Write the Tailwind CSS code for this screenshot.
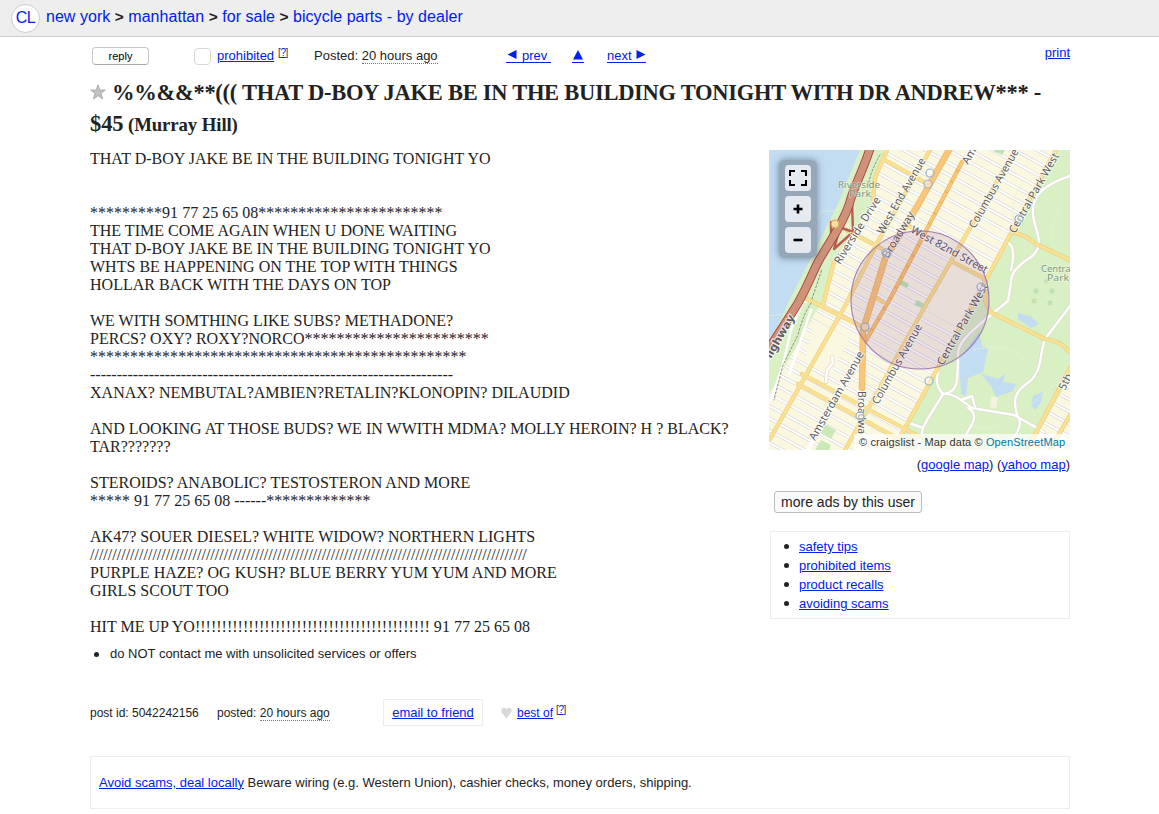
<!DOCTYPE html>
<html lang="en">
<head>
<meta charset="utf-8">
<title>craigslist</title>
<script src="https://cdn.jsdelivr.net/npm/@tailwindcss/browser@4"></script>
</head>
<body class="w-[1159px] h-[814px] overflow-hidden bg-white text-[#222] font-['Liberation_Sans',Arial,sans-serif] text-[13px] whitespace-nowrap">
<header class="h-[37px] bg-[#eee] border-b border-[#ccc] flex items-center pl-[11px] text-[16px] leading-[20px] text-[#0020ee]">
  <a class="size-[29px] rounded-full border border-[#ccc] bg-white flex items-center justify-center text-[16px] tracking-[-0.6px]">CL</a>
  <nav class="ml-1.5 -mt-[3px] tracking-[0.03px]"><a>new york</a> <b class="text-[#222] text-[15.5px]">&gt;</b> <a>manhattan</a> <b class="text-[#222] text-[15.5px]">&gt;</b> <a>for sale</a> <b class="text-[#222] text-[15.5px]">&gt;</b> <a>bicycle parts - by dealer</a></nav>
</header>
<main class="ml-[90px] w-[980px]">
  <div class="flex h-[38px] pt-[9px] leading-[19px]">
    <button class="ml-[2px] mt-[1px] w-[57px] h-[18px] rounded-[4px] border border-[#c8c8c8] border-b-[#aaa] text-[11px] leading-[16px] text-black">reply</button>
    <span class="ml-[45px] mt-[2px] w-[17px] h-[17px] rounded-[4px] border border-[#d8d8d8]"></span>
    <a class="ml-[6px] underline text-[#0020ee] w-[57px]">prohibited</a>
    <span class="ml-[4px] -mt-[3px] text-[10px] tracking-[-0.4px] text-[#333] w-[12px]">[<a class="underline text-[#0020ee]">?</a>]</span>
    <span class="ml-[24px] w-[123px]">Posted: <span class="border-b border-dotted border-[#777]">20 hours ago</span></span>
    <a class="ml-[69px] w-[45px] h-[17px] pt-[2px] border-b border-[#0020ee] text-[#0020ee] flex items-center"><svg class="w-[10px] h-[9px] ml-px mr-[5px] -mt-[2px]" viewBox="0 0 10 10"><path d="M0 5 10 0V10Z" fill="currentColor"/></svg>prev</a>
    <a class="ml-[21px] w-[12px] h-[17px] pt-[2px] border-b border-[#0020ee] text-[#0020ee] flex items-center justify-center"><svg class="w-[10px] h-[10px]" viewBox="0 0 10 10"><path d="M5 0 10 9.5H0Z" fill="currentColor"/></svg></a>
    <a class="ml-[23px] w-[39px] h-[17px] pt-[2px] border-b border-[#0020ee] text-[#0020ee] flex items-center">next<svg class="w-[10px] h-[9px] ml-[4px] -mt-[2px]" viewBox="0 0 10 10"><path d="M10 5 0 0V10Z" fill="currentColor"/></svg></a>
    <a class="ml-auto -mt-[3px] underline text-[#0020ee]">print</a>
  </div>
  <h2 class="h-[75px] pt-[2px] font-bold font-['Liberation_Serif',serif] text-[22.5px] leading-[32px]">
    <div class="flex"><svg class="w-[16px] h-[16px] mt-[7px] mr-[6px]" viewBox="0 0 16 16"><path d="M8 .8 9.9 6H15.3L11 9.4 12.7 15 8 11.7 3.3 15 5 9.4 .7 6H6.1Z" fill="#c4c2c2" stroke="#a5a3a3" stroke-width=".8"/></svg><span class="tracking-[-0.27px]">%%&amp;&amp;**((( THAT D-BOY JAKE BE IN THE BUILDING TONIGHT WITH DR ANDREW*** -</span></div>
    <div class="-mt-px tracking-[-0.1px]">$45 <span class="text-[18.8px] -ml-px">(Murray Hill)</span></div>
  </h2>
  <div class="flex h-[549px]">
    <div class="w-[679px]">
      <section class="font-['Liberation_Serif',serif] text-[16px] leading-[18px] h-[495px] whitespace-pre tracking-[0.012px]">THAT D-BOY JAKE BE IN THE BUILDING TONIGHT YO


*********91 77 25 65 08***********************
THE TIME COME AGAIN WHEN U DONE WAITING
THAT D-BOY JAKE BE IN THE BUILDING TONIGHT YO
WHTS BE HAPPENING ON THE TOP WITH THINGS
HOLLAR BACK WITH THE DAYS ON TOP

WE WITH SOMTHING LIKE SUBS? METHADONE?
PERCS? OXY? ROXY?NORCO***********************
***********************************************
--------------------------------------------------------------------
XANAX? NEMBUTAL?AMBIEN?RETALIN?KLONOPIN? DILAUDID

AND LOOKING AT THOSE BUDS? WE IN WWITH MDMA? MOLLY HEROIN? H ? BLACK?
TAR???????

STEROIDS? ANABOLIC? TESTOSTERON AND MORE
***** 91 77 25 65 08 ------*************

AK47? SOUER DIESEL? WHITE WIDOW? NORTHERN LIGHTS
//////////////////////////////////////////////////////////////////////////////////////////////////
PURPLE HAZE? OG KUSH? BLUE BERRY YUM YUM AND MORE
GIRLS SCOUT TOO

HIT ME UP YO!!!!!!!!!!!!!!!!!!!!!!!!!!!!!!!!!!!!!!!!!!!! 91 77 25 65 08</section>
      <div class="flex items-center h-[18px]"><span class="ml-[4px] mr-[11px] size-[5px] rounded-full bg-[#222]"></span>do NOT contact me with unsolicited services or offers</div>
      <div class="flex items-center mt-[36px] h-[27px]">
        <span class="w-[127px] text-[12px]">post id: 5042242156</span>
        <span class="w-[166px] text-[12px]">posted: <span class="border-b border-dotted border-[#777]">20 hours ago</span></span>
        <span class="w-[100px] h-[27px] border border-[#eee] flex items-center justify-center text-[#0020ee] underline">email to friend</span>
        <svg class="ml-[18px] w-[11px] h-[12px] mt-[1px]" viewBox="0 0 11 12"><path d="M5.5 12C4.7 9.3 .3 6.5 .3 3.2 .3 .2 4.4-.3 5.5 2.5 6.6-.3 10.7 .2 10.7 3.2 10.7 6.5 6.3 9.3 5.5 12Z" fill="#d8d8d8"/></svg>
        <a class="ml-[5px] w-[37px] text-[12px] underline text-[#0020ee]">best of</a>
        <span class="ml-[2px] -mt-[7px] text-[10px] tracking-[-0.4px] text-[#333]">[<a class="underline text-[#0020ee]">?</a>]</span>
      </div>
    </div>
    <aside class="w-[301px]">
      <div class="relative w-[301px] h-[300px] overflow-hidden">
        <svg class="block" width="301" height="300" viewBox="0 0 301 300" fill="none" stroke-linecap="round" stroke-linejoin="round">
          <rect width="301" height="300" fill="#fbf8e2"/>
          <g transform="rotate(28.7)">
            <path class="grid-lines" stroke="#d9d3d3" stroke-width="3.2"/><path class="grid-lines" stroke="#fff" stroke-width="2"/>
          </g>
          <path d="M183 114 215 132 190 178 158 161Z" fill="#fbf8e2"/>
          <path d="M45 170 80 188 62 225 36 212Z" fill="#fbf8e2"/>
          <path d="M0 0H118L106 28 104 52 64 112 54 149 0 245Z" fill="#d9efc4"/>
          <path d="M0 0H91L68 56 43 106 20 151 0 195Z" fill="#c2dcf2"/>
          <path d="M45 76 52 61H67M0 166 20 163" stroke="#dbe8df" stroke-width="1"/>
          <path d="M42 150 34 152 22 180 14 215 2 250M42 160 20 225" stroke="#fff" stroke-width="2.5"/>
          <path d="M63 207 64 213 58 220 57 232" stroke="#e2dcd2" stroke-width="4"/><path d="M63 207 64 213 58 220 57 232" stroke="#fff" stroke-width="2.5"/>
          <path d="M287 0 219 126 124 300H260L301 226V0Z" fill="#d9efc4"/>
          <path d="M139 300 151 262 160 245V300Z" fill="#d9efc4"/>
          <path d="M56 274 67 280 62 289 52 283ZM52 290 62 295 60 300H46Z" fill="#cbe8b8"/>
          <path d="M225 0H236L233 5 224 1ZM131 129 140 134 138 138 129 134ZM148 150 156 154 154 158 145 155Z" fill="#bfe3b5"/>
          <g fill="#c2dcf2">
            <path d="M210 182 213 196 219 199 214 222 199 228 197 246 192 244 190 209Z"/>
            <path d="M212 224 229 229 236 224 234 232 247 234 244 241 227 247 222 236Z"/>
            <path d="M264 246 274 242 272 252 266 260 262 255ZM249 163 261 166 270 174 262 178 249 169Z"/>
          </g>
          <g fill="#bfe1b6"><circle cx="267" cy="141" r="2.5"/><circle cx="283" cy="141" r="2.5"/><circle cx="277" cy="131" r="2"/><circle cx="265" cy="151" r="2.5"/><circle cx="281" cy="153" r="2.5"/></g>
          <path d="M255 30Q235 60 250 80T245 130M290 60Q275 90 290 105M180 260Q210 290 240 270T290 230M205 200Q240 190 260 215" stroke="#e6f4d9" stroke-width="1" stroke-dasharray="2 2"/>
          <g stroke="#ddd6d0" stroke-width="3.4">
            <path class="park-road"/>
          </g>
          <path class="park-road" stroke="#fff" stroke-width="2.4"/>
          <path d="M222 247H229L227 259 221 257Z" fill="#f6f1dc"/>
          <path class="avenue" stroke="#e8cb74" stroke-width="4.2"/>
          <path class="avenue" stroke="#f9e092" stroke-width="3.2"/>
          <path d="M94 196 39 300M92 242V300" stroke="#fff" stroke-width="4"/>
          <path d="M193 12 149 96 121 149 96 192" stroke="#eeb45c" stroke-width="4.2"/>
          <path d="M193 12 149 96 121 149 96 192" stroke="#f9c77a" stroke-width="2.8" stroke-dasharray="8 4"/>
          <path d="M180 0 149 55 116 109 103 151 94 180 93 238" stroke="#efb968" stroke-width="6.5"/>
          <path d="M180 0 149 55 116 109 103 151 94 180 93 238" stroke="#f9c67c" stroke-width="5" stroke-dasharray="12 4"/>
          <path d="M83 52 84 82 65 99 73 70ZM84 82 67 76 62 84 62 72" stroke="#bd5b50" stroke-width="2.4"/>
          <path d="M103-8C95 20 85 35 80 55 72 78 60 92 49 112 38 135 34 146 26 158L-4 205" stroke="#a5443c" stroke-width="9" stroke-linecap="butt"/>
          <path d="M103-8C95 20 85 35 80 55 72 78 60 92 49 112 38 135 34 146 26 158L-4 205" stroke="#cf9279" stroke-width="7.2" stroke-linecap="butt"/>
          <circle cx="66" cy="74" r="4" fill="#f8dfa0" stroke="#d9a54c"/><circle cx="79" cy="75" r="2" fill="#f6efc8"/><circle cx="75" cy="84" r="2" fill="#f6efc8"/>
          <path d="M111 5Q102 20 99 36M43 149 53 119M42 153Q34 165 29 185L14 215 5 250" stroke="#8b9080" stroke-width="1" stroke-dasharray="2 2"/>
          <g font-family="'Noto Sans','DejaVu Sans',sans-serif" font-size="11" fill="#5c5c5c" stroke="#fff" stroke-opacity=".75" stroke-width="2" paint-order="stroke">
            <text transform="translate(71 115) rotate(-57.8)" textLength="77" lengthAdjust="spacingAndGlyphs">Riverside Drive</text>
            <text transform="translate(114 85) rotate(-60)" textLength="86" lengthAdjust="spacingAndGlyphs">West End Avenue</text>
            <text transform="translate(119 109) rotate(-59)" textLength="52" lengthAdjust="spacingAndGlyphs">Broadway</text>
            <text transform="translate(199 15) rotate(-60)">Am</text>
            <text transform="translate(206 79) rotate(-60.5)" textLength="89" lengthAdjust="spacingAndGlyphs">Columbus Avenue</text>
            <text transform="translate(246 84) rotate(-60.5)" textLength="90" lengthAdjust="spacingAndGlyphs">Central Park West</text>
            <text transform="translate(141 82) rotate(29)" textLength="86" lengthAdjust="spacingAndGlyphs">West 82nd Street</text>
            <text transform="translate(2 209) rotate(-60)" textLength="48" lengthAdjust="spacingAndGlyphs" font-weight="bold">lighway</text>
            <text transform="translate(46 291) rotate(-60.5)" textLength="100" lengthAdjust="spacingAndGlyphs">Amsterdam Avenue</text>
            <text transform="translate(109 255) rotate(-60.5)" textLength="90" lengthAdjust="spacingAndGlyphs">Columbus Avenue</text>
            <text transform="translate(174 216) rotate(-60.5)" textLength="92" lengthAdjust="spacingAndGlyphs">Central Park West</text>
            <text transform="translate(89 241) rotate(90)" textLength="43" lengthAdjust="spacingAndGlyphs">Broadwa</text>
            <text transform="translate(296 241) rotate(-64)">5th</text>
          </g>
          <g fill="#fff" fill-opacity=".4" stroke="#94b3cf" stroke-width="1.2"><circle cx="161" cy="23" r="4"/><circle cx="159" cy="34" r="4"/><circle cx="250" cy="69" r="4"/><circle cx="117" cy="103" r="4"/><circle cx="96" cy="177" r="4"/><circle cx="212" cy="137" r="4"/><circle cx="160" cy="231" r="4"/><circle cx="91" cy="266" r="4"/></g>
          <g font-family="'Noto Sans','DejaVu Sans',sans-serif" font-size="9.5" fill="#7e987c" text-anchor="middle" stroke="#fff" stroke-opacity=".4" stroke-width="1.5" paint-order="stroke">
            <text x="90" y="38" textLength="42" lengthAdjust="spacingAndGlyphs">Riverside</text><text x="91" y="47" textLength="22" lengthAdjust="spacingAndGlyphs">Park</text><text x="288" y="122" textLength="32" lengthAdjust="spacingAndGlyphs">Central</text><text x="289" y="131" textLength="22" lengthAdjust="spacingAndGlyphs">Park</text>
          </g>
          <circle cx="151" cy="150" r="69" fill="#5c1080" fill-opacity=".11" stroke="#9060a8" stroke-opacity=".8" stroke-width="1.1"/>
        </svg>
        <div class="absolute left-[10px] top-[10px] w-[38px] h-[98px] rounded-[6px] bg-[#96a8b8] shadow-[0_0_6px_1px_rgba(70,90,110,.5)] flex flex-col gap-[5px] items-center pt-[5px]">
          <span class="size-[26px] rounded-[4px] bg-[#e4eaef] flex items-center justify-center"><svg width="18" height="16" viewBox="0 0 18 16" fill="none" stroke="#000" stroke-width="2"><path d="M1 6V1H6M12 1H17V6M17 10V15H12M6 15H1V10"/></svg></span>
          <span class="size-[26px] rounded-[4px] bg-[#e4eaef] flex items-center justify-center"><svg width="10" height="10" viewBox="0 0 10 10" stroke="#000" stroke-width="2.6"><path d="M.5 5H9.5M5 .5V9.5"/></svg></span>
          <span class="size-[26px] rounded-[4px] bg-[#e4eaef] flex items-center justify-center"><svg width="10" height="10" viewBox="0 0 10 10" stroke="#000" stroke-width="2.6"><path d="M.5 5H9.5"/></svg></span>
        </div>
        <div class="absolute right-0 bottom-0 h-[16px] w-[216px] pl-[5px] bg-white/70 text-[11px] tracking-[0.12px] leading-[16px] text-[#333]">© craigslist - Map data © <a class="text-[#0078a8]">OpenStreetMap</a></div>
      </div>
      <div class="text-right h-[41px] pt-[6px] leading-[18px]">(<a class="underline text-[#0020ee]">google map</a>) (<a class="underline text-[#0020ee]">yahoo map</a>)</div>
      <button class="block ml-[5px] w-[148px] h-[22px] rounded-[3px] border border-[#bbb] bg-[#fafafa] text-[14px] leading-[20px]">more ads by this user</button>
      <ul class="mt-[18px] ml-px w-[300px] h-[88px] border border-[#eee] pt-[5px] leading-[19px] text-[#0020ee] underline">
        <li class="flex items-center"><i class="ml-[13px] mr-[10px] size-[5px] rounded-full bg-[#222]"></i>safety tips</li>
        <li class="flex items-center"><i class="ml-[13px] mr-[10px] size-[5px] rounded-full bg-[#222]"></i>prohibited items</li>
        <li class="flex items-center"><i class="ml-[13px] mr-[10px] size-[5px] rounded-full bg-[#222]"></i>product recalls</li>
        <li class="flex items-center"><i class="ml-[13px] mr-[10px] size-[5px] rounded-full bg-[#222]"></i>avoiding scams</li>
      </ul>
    </aside>
  </div>
  <footer class="mt-[57px] h-[53px] border border-[#eee] flex items-center pl-[8px]"><p><a class="underline text-[#0020ee]">Avoid scams, deal locally</a> Beware wiring (e.g. Western Union), cashier checks, money orders, shipping.</p></footer>
</main>
<script>
  const fill = (cls, d) => document.querySelectorAll(cls).forEach(p => p.setAttribute('d', d));
  let grid = '';
  for (let y = -150; y < 300; y += 10.7) grid += `M-20 ${y}H420`;
  fill('.grid-lines', grid);
  fill('.park-road', 'M301 26C275 35 262 45 264 65 267 85 277 95 262 107 245 118 242 125 242 133L239 151 218 168C205 180 190 190 189 203 189 235 188 243 174 244 165 235 168 225 170 216M237 91Q248 96 242 120M301 156 276 189C270 205 274 220 260 232 245 242 244 250 248 265 256 275 245 285 240 300M174 244 158 270 154 278 149 300M154 278 140 273M174 244C185 243 192 250 203 258L245 265 275 282M199 258C210 265 205 272 195 288L188 300M192 250 203 246 206 257');
  fill('.avenue', 'M118 0 106 28 104 52M65 112 54 155M161 0 107 95 76 156 1 289M246 0 159 151 99 259 76 300M287 0 219 126 124 300M114 9 159 34M79 81 113 99M137 74 150 82M182 111 217 129M36 148 100 180M106 147 114 152M33 224 151 287M29 234 126 287M244 83Q255 84 267 94L301 110M217 129 216 150 221 162 276 189Q290 190 301 202M301 218 258 300M301 265 281 300');
</script>
</body>
</html>
